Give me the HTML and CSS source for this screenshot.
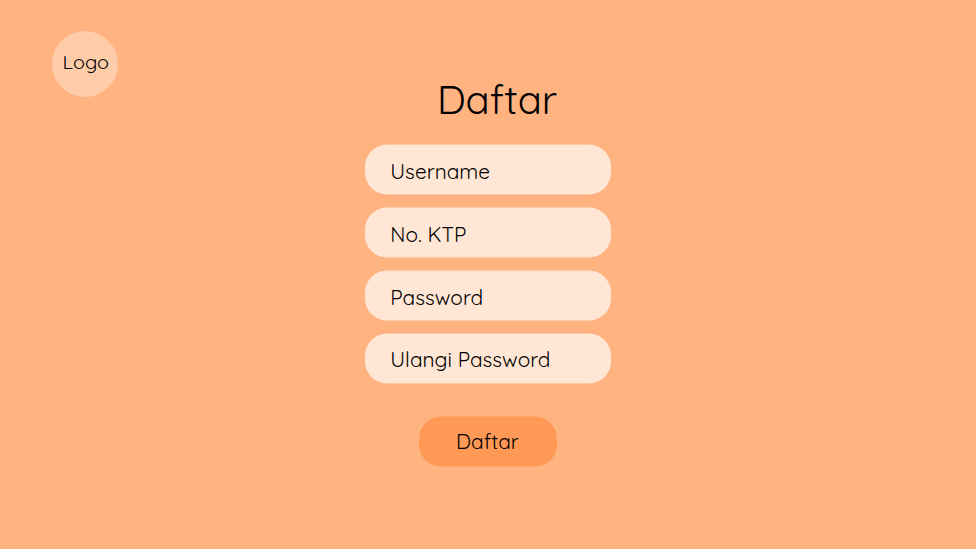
FILE: index.html
```html
<!DOCTYPE html>
<html lang="id">
<head>
<meta charset="utf-8">
<title>Daftar</title>
<link rel="stylesheet" href="styles.css">
</head>
<body>
<header class="header"><div class="logo">Logo</div></header>
<main class="register">
<h1 class="title">Daftar</h1>
<form class="form">
<div class="field">Username</div>
<div class="field">No. KTP</div>
<div class="field">Password</div>
<div class="field field-last">Ulangi Password</div>
<button class="submit" type="button">Daftar</button>
</form>
</main>
</body>
</html>
```

FILE: styles.css
```css
* { box-sizing: border-box; }
body {
  margin: 0;
  height: 549px;
  overflow: hidden;
  background: #ffb380;
  color: #000;
  font-family: Quicksand, Lato, sans-serif;
  font-weight: 400;
}
.header { height: 76px; padding: 31px 0 0 52px; }
.logo {
  width: 66px;
  height: 66px;
  padding-left: 10.5px;
  border-radius: 50%;
  background: #ffcca9;
  font-size: 19.8px;
  line-height: 62px;
  white-space: nowrap;
}
.register { width: 246px; margin-left: 365px; }
.title {
  margin: 0;
  padding-left: 72px;
  height: 68px;
  font-size: 39.8px;
  font-weight: 400;
  line-height: 46px;
}
.form {
  display: flex;
  flex-direction: column;
  gap: 13px;
  transform: translateY(0.5px);
}
.field {
  height: 50px;
  padding-left: 25.3px;
  border-radius: 22px;
  background: #ffe6d5;
  font-size: 20.8px;
  line-height: 53px;
}
.field-last { line-height: 51px; }
.submit {
  align-self: center;
  width: 138px;
  height: 50px;
  margin-top: 20px;
  padding: 0 1px 2px 0;
  border: 0;
  border-radius: 22px;
  background: #ff9955;
  color: #000;
  font: inherit;
  font-size: 20.8px;
  line-height: 48px;
}
```
